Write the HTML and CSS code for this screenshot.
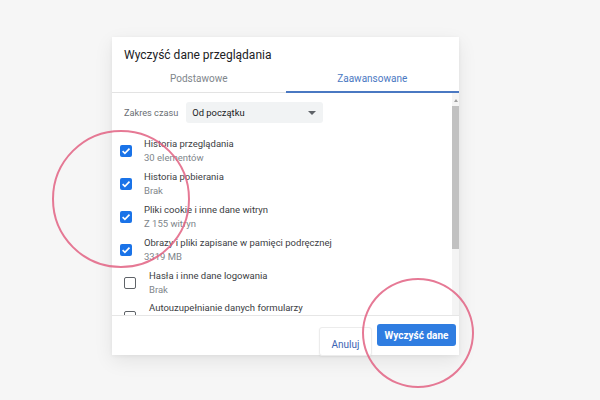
FILE: index.html
```html
<!DOCTYPE html>
<html>
<head>
  <link rel="stylesheet" href="styles.css">
  <title>Wyczyść dane przeglądania</title>
</head>
<body>
  <div class="page">
    <div class="dialog">
      <div class="dialog-title">Wyczyść dane przeglądania</div>

      <div class="tabs">
        <div class="tab">Podstawowe</div>
        <div class="tab active">Zaawansowane</div>
      </div>

      <div class="content">
        <div class="list">
          <div class="range">
            <span class="range-label">Zakres czasu</span>
            <div class="select">
              <span>Od początku</span>
              <span class="select-arrow"></span>
            </div>
          </div>

          <div class="item">
            <span class="checkbox checked">
              <svg viewBox="0 0 12 12" width="12" height="12"><path d="M2.6 6.2l2.3 2.2 4.6-4.8" fill="none" stroke="#fff" stroke-width="1.6"/></svg>
            </span>
            <div class="item-text">
              <div class="item-title">Historia przeglądania</div>
              <div class="item-sub">30 elementów</div>
            </div>
          </div>
          <div class="item">
            <span class="checkbox checked">
              <svg viewBox="0 0 12 12" width="12" height="12"><path d="M2.6 6.2l2.3 2.2 4.6-4.8" fill="none" stroke="#fff" stroke-width="1.6"/></svg>
            </span>
            <div class="item-text">
              <div class="item-title">Historia pobierania</div>
              <div class="item-sub">Brak</div>
            </div>
          </div>
          <div class="item">
            <span class="checkbox checked">
              <svg viewBox="0 0 12 12" width="12" height="12"><path d="M2.6 6.2l2.3 2.2 4.6-4.8" fill="none" stroke="#fff" stroke-width="1.6"/></svg>
            </span>
            <div class="item-text">
              <div class="item-title">Pliki cookie i inne dane witryn</div>
              <div class="item-sub">Z 155 witryn</div>
            </div>
          </div>
          <div class="item">
            <span class="checkbox checked">
              <svg viewBox="0 0 12 12" width="12" height="12"><path d="M2.6 6.2l2.3 2.2 4.6-4.8" fill="none" stroke="#fff" stroke-width="1.6"/></svg>
            </span>
            <div class="item-text">
              <div class="item-title">Obrazy i pliki zapisane w pamięci podręcznej</div>
              <div class="item-sub">3319 MB</div>
            </div>
          </div>
          <div class="item item-off">
            <span class="checkbox"></span>
            <div class="item-text">
              <div class="item-title">Hasła i inne dane logowania</div>
              <div class="item-sub">Brak</div>
            </div>
          </div>
          <div class="item item-off item-last">
            <span class="checkbox"></span>
            <div class="item-text">
              <div class="item-title">Autouzupełnianie danych formularzy</div>
            </div>
          </div>
        </div>

        <div class="scrollbar">
          <div class="scroll-arrow"></div>
          <div class="scroll-thumb"></div>
        </div>
      </div>

      <div class="footer">
        <button class="btn btn-cancel">Anuluj</button>
        <button class="btn btn-primary">Wyczyść dane</button>
      </div>
    </div>

    <div class="ring ring-left"></div>
    <div class="ring ring-right"></div>
  </div>
</body>
</html>
```

FILE: styles.css
```css
/* Chrome "clear browsing data" dialog */
body {
  margin: 0;
  font-family: Roboto, "Noto Sans", Arial, sans-serif;
  background-color: #f6f6f6;
}

.page {
  position: relative;
  width: 600px;
  height: 400px;
  overflow: hidden;
  padding-top: 37px;
  box-sizing: border-box;
}

.dialog {
  margin-left: 112px;
  width: 347px;
  background-color: #fff;
  box-shadow: 0 6px 18px rgba(0, 0, 0, 0.08), 0 1px 4px rgba(0, 0, 0, 0.05);
}

.dialog-title {
  padding: 10px 12px 0;
  font-size: 12px;
  line-height: 16px;
  color: #202124;
}

.tabs {
  display: flex;
  border-bottom: 1px solid #e3e3e3;
}

.tab {
  flex: 1;
  text-align: center;
  padding: 10px 0 6px;
  font-size: 10px;
  line-height: 12px;
  color: #80868b;
  border-bottom: 2px solid transparent;
  margin-bottom: -1px;
}

.tab.active {
  color: #4a78c2;
  border-bottom-color: #4a78c2;
}

.content {
  display: flex;
  height: 222px;
}

.list {
  flex: 1;
  overflow: hidden;
  padding: 9px 0 0 8px;
}

.range {
  display: flex;
  align-items: center;
  gap: 8px;
  padding-left: 4px;
  margin-bottom: 11px;
}

.range-label {
  font-size: 9.2px;
  color: #6a6e73;
}

.select {
  display: flex;
  align-items: center;
  justify-content: space-between;
  width: 137px;
  height: 21px;
  padding: 0 7px 0 6px;
  box-sizing: border-box;
  background-color: #f1f3f4;
  border-radius: 3px;
  font-size: 9.4px;
  color: #202124;
}

.select-arrow {
  width: 0;
  height: 0;
  border-left: 4px solid transparent;
  border-right: 4px solid transparent;
  border-top: 4px solid #5f6368;
}

.item {
  display: flex;
  align-items: center;
  height: 33px;
}

.item-off {
  padding-left: 4px;
}

.item-last {
  align-items: flex-start;
  padding-top: 2px;
}

.checkbox {
  flex: none;
  display: flex;
  width: 12px;
  height: 12px;
  box-sizing: border-box;
  border: 1.5px solid #5f6368;
  border-radius: 2px;
  margin-right: 12px;
}

.checkbox.checked {
  border: none;
  background-color: #1a73e8;
}

.item-off .checkbox {
  margin-right: 13px;
}

.item-last .checkbox {
  margin-top: 10px;
}

.item-title {
  font-size: 9.5px;
  line-height: 14px;
  color: #3c4043;
}

.item-sub {
  font-size: 9.5px;
  line-height: 14px;
  color: #80868b;
}

.scrollbar {
  width: 7px;
  background-color: #f4f4f4;
  display: flex;
  flex-direction: column;
  align-items: center;
}

.scroll-arrow {
  margin-top: 6px;
  width: 0;
  height: 0;
  border-left: 2.5px solid transparent;
  border-right: 2.5px solid transparent;
  border-bottom: 3px solid #a0a0a0;
}

.scroll-thumb {
  margin-top: 4px;
  width: 7px;
  height: 143px;
  background-color: #c1c1c1;
}

.footer {
  display: flex;
  justify-content: flex-end;
  align-items: flex-start;
  gap: 5px;
  height: 40px;
  padding: 8px 3px 0 0;
  box-sizing: border-box;
  border-top: 1px solid #e6e6e6;
}

.btn {
  font-family: Roboto, "Noto Sans", Arial, sans-serif;
  font-size: 10px;
  border-radius: 3px;
  cursor: pointer;
}

.btn-cancel {
  margin-top: 3px;
  width: 53px;
  height: 29px;
  padding-top: 6px;
  background-color: #fff;
  color: #3b64b3;
  border: 1px solid #ececec;
  box-shadow: 0 1px 2px rgba(0, 0, 0, 0.05);
}

.btn-primary {
  width: 79px;
  height: 22px;
  background-color: #2f7de1;
  color: #fff;
  font-weight: bold;
  border: none;
}

.ring {
  position: absolute;
  border: 2px solid rgba(226, 98, 130, 0.85);
  border-radius: 50%;
  box-sizing: border-box;
}

.ring-left {
  left: 52px;
  top: 130px;
  width: 138px;
  height: 138px;
}

.ring-right {
  left: 362px;
  top: 278px;
  width: 112px;
  height: 110px;
}
```
